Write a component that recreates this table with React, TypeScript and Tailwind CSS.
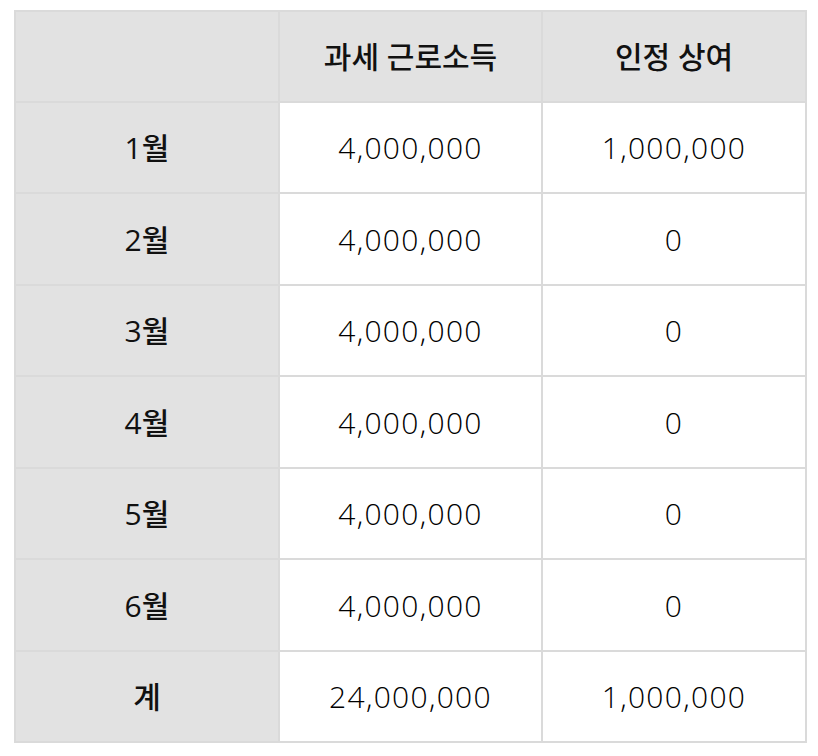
import React from 'react';

type Row = { month: string; income: string; bonus: string; h: string };

export default function App() {
  // 월별 과세 근로소득 / 인정 상여
  const rows: Row[] = [
    { month: '1월', income: '4,000,000', bonus: '1,000,000', h: 'h-[91px]' },
    { month: '2월', income: '4,000,000', bonus: '0', h: 'h-[92px]' },
    { month: '3월', income: '4,000,000', bonus: '0', h: 'h-[91px]' },
    { month: '4월', income: '4,000,000', bonus: '0', h: 'h-[92px]' },
    { month: '5월', income: '4,000,000', bonus: '0', h: 'h-[91px]' },
    { month: '6월', income: '4,000,000', bonus: '0', h: 'h-[92px]' },
    { month: '계', income: '24,000,000', bonus: '1,000,000', h: 'h-[91px]' },
  ];

  const cell = 'border-2 border-[#dadada] text-center align-middle p-0';

  return (
    <div className="min-h-screen bg-white pl-[14px] pt-[10px] font-['Open_Sans','Noto_Sans_CJK_KR',sans-serif] text-[#111]">
      <table className="w-[791px] table-fixed border-collapse text-[30px]">
        <colgroup>
          <col className="w-[264px]" />
          <col className="w-[263px]" />
          <col className="w-[264px]" />
        </colgroup>
        <thead>
          <tr className="h-[91px] bg-[#e2e2e2]">
            <th className={cell}></th>
            <th className={`${cell} font-medium`}>과세 근로소득</th>
            <th className={`${cell} font-medium`}>인정 상여</th>
          </tr>
        </thead>
        <tbody>
          {rows.map((r) => (
            <tr key={r.month} className={r.h}>
              <th className={`${cell} bg-[#e2e2e2] font-medium`}>{r.month}</th>
              <td className={`${cell} font-[350] text-black tracking-[1.3px]`}>{r.income}</td>
              <td className={`${cell} font-[350] text-black tracking-[1.3px]`}>{r.bonus}</td>
            </tr>
          ))}
        </tbody>
      </table>
    </div>
  );
}
